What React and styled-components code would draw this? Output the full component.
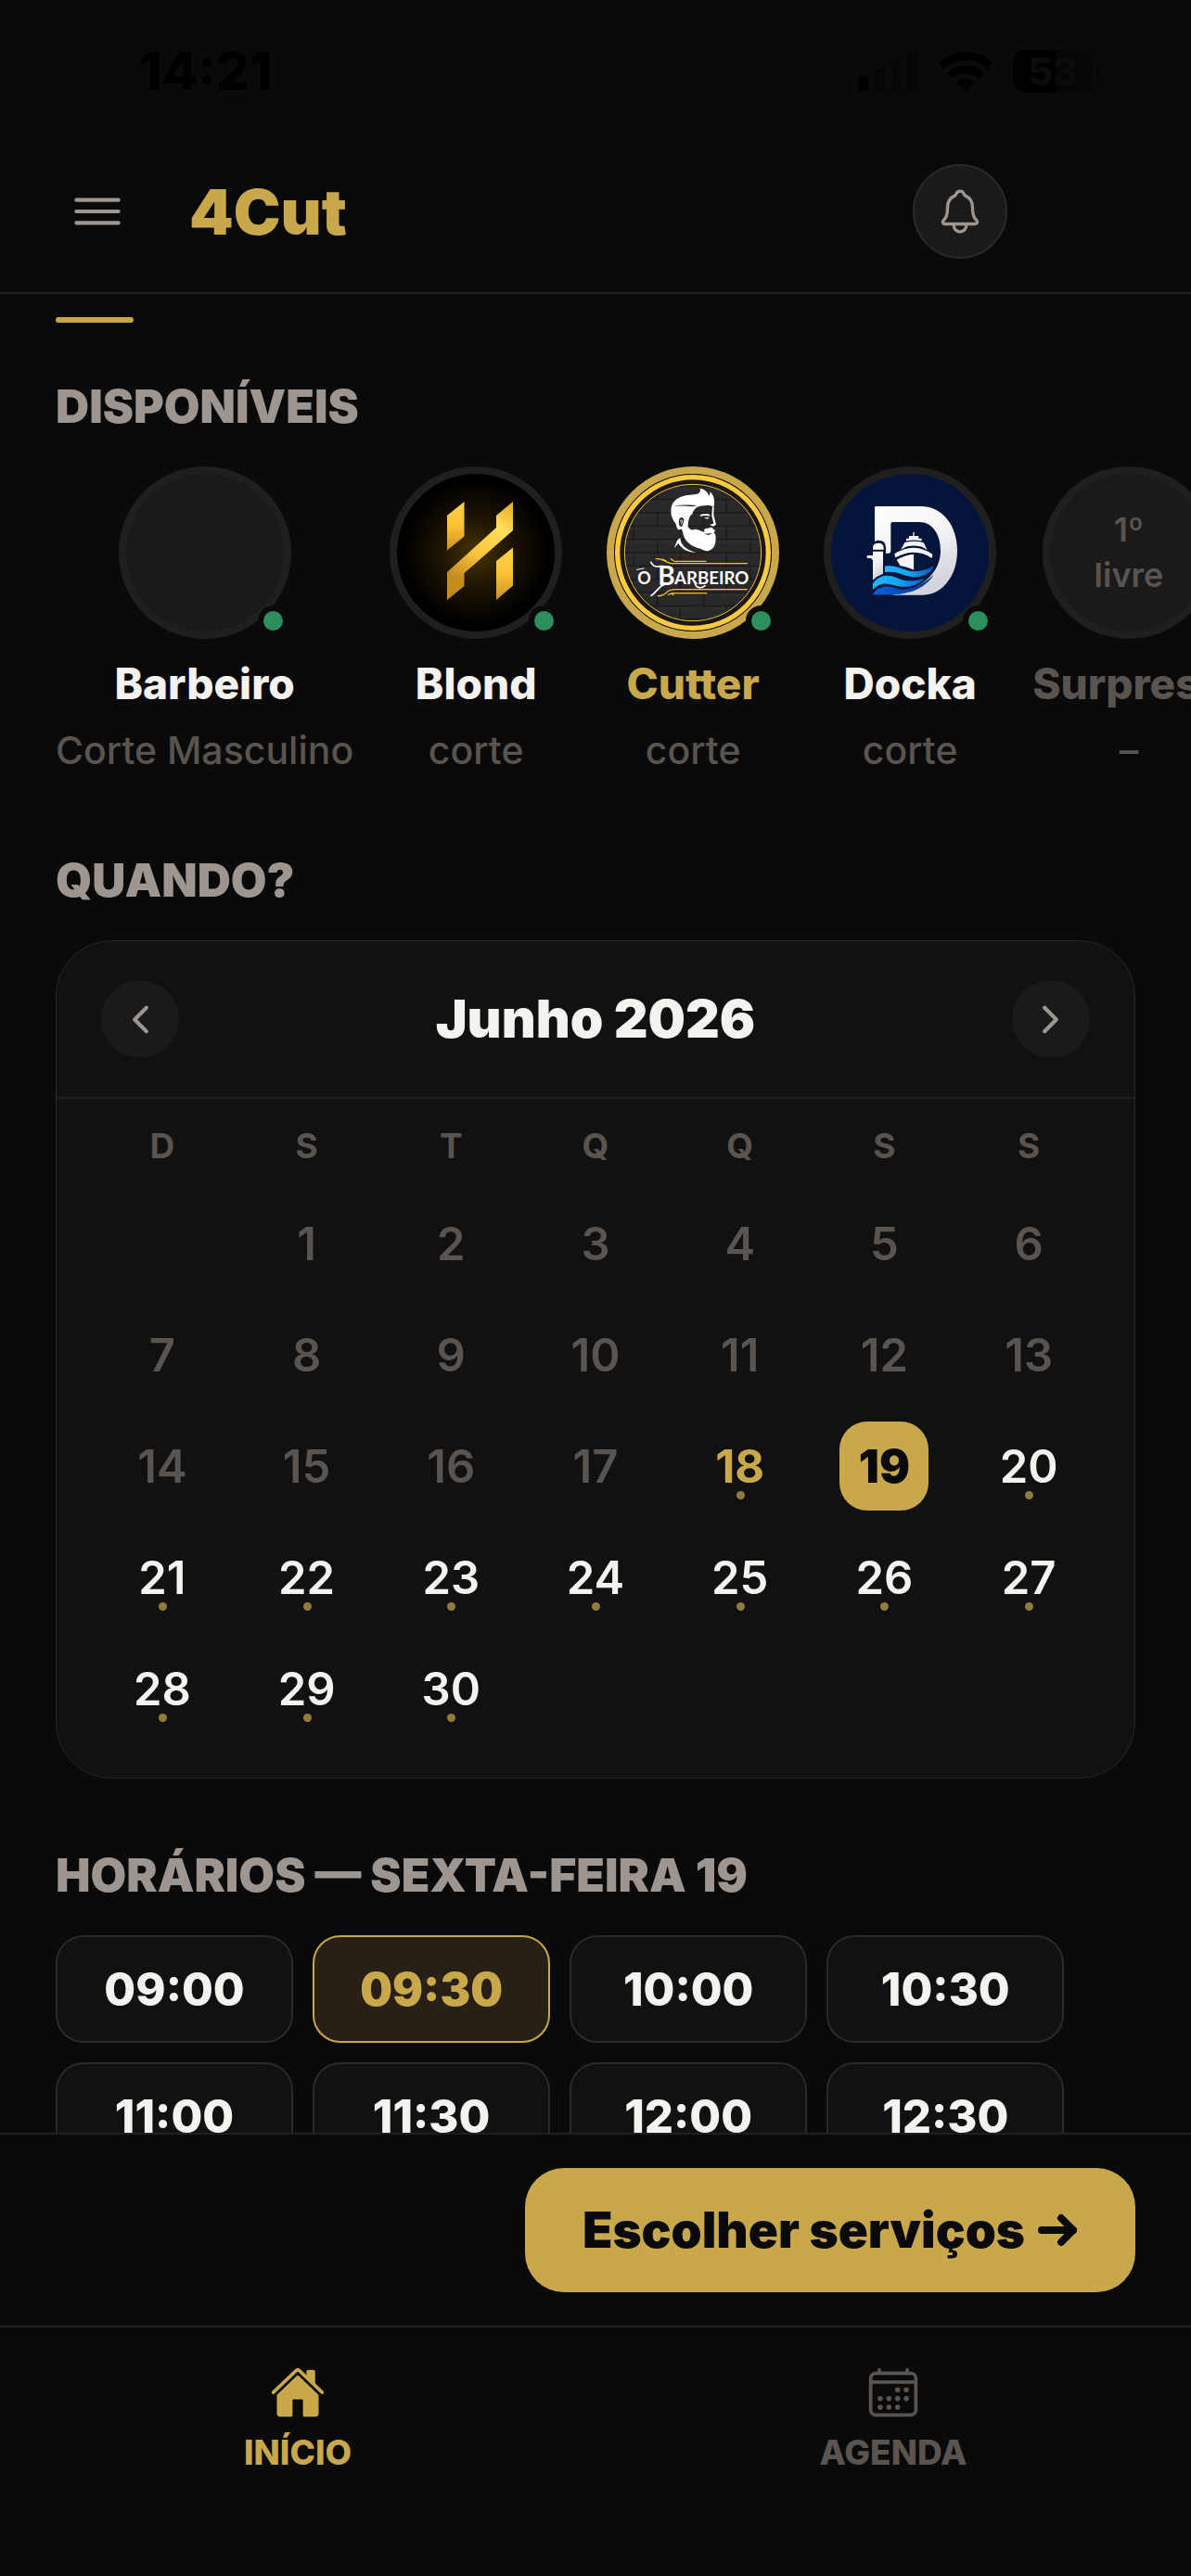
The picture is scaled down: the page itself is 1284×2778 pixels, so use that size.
import styled, { createGlobalStyle } from "styled-components";
import React, { useState } from 'react';
import {
    IoMenuOutline,
    IoNotificationsOutline,
    IoChevronBack,
    IoChevronForward,
    IoHome,
    IoCalendarOutline,
} from 'react-icons/io5';


const GlobalStyle = createGlobalStyle`
* {
  box-sizing: border-box;
}
body {
  margin: 0;
  background-color: #0a0a0a;
  color: #f5f3ef;
  font-family: "Inter", sans-serif;
}
button {
  margin: 0;
  padding: 0;
  border: none;
  background: none;
  color: inherit;
  font: inherit;
  cursor: pointer;
}
svg {
  display: block;
}
`;

const Screen = styled.div`
display: flex;
flex-direction: column;
height: 100vh;
overflow: hidden;
`;

const StatusBar = styled.div`
display: flex;
justify-content: space-between;
align-items: center;
height: 141px;
padding: 12px 97px 0 150px;
flex-shrink: 0;
color: #000000;
`;

const Clock = styled.div`
font-size: 56px;
font-weight: 800;
`;

const StatusIcons = styled.div`
display: flex;
align-items: center;
gap: 22px;
`;

const Battery = styled.div`
display: flex;
align-items: center;
gap: 3px;
`;

const BatteryBody = styled.div`
width: 86px;
height: 46px;
border-radius: 14px;
background: linear-gradient(to right, #000000 53%, #060606 53%);
color: #0c0c0c;
font-size: 41px;
font-weight: 800;
line-height: 46px;
text-align: center;
`;

const BatteryTip = styled.div`
width: 6px;
height: 14px;
border-radius: 0 6px 6px 0;
background-color: #060606;
`;

const Header = styled.header`
display: flex;
align-items: center;
padding: 36px 60px;
border-bottom: 2px solid #1f1f1f;
flex-shrink: 0;
`;

const MenuButton = styled.button`
display: flex;
justify-content: center;
width: 90px;
color: #9c9590;
font-size: 66px;
`;

const Brand = styled.h1`
flex: 1;
margin: 0 0 0 54px;
color: #c9a84c;
font-size: 68px;
line-height: 80px;
font-weight: 900;
`;

const BellButton = styled.button`
display: flex;
justify-content: center;
align-items: center;
width: 102px;
height: 102px;
margin-right: 138px;
border: 2px solid #2a2a2a;
border-radius: 50%;
background-color: #1a1a1a;
color: #9c9590;
font-size: 54px;
`;

const Content = styled.main`
flex: 1;
min-height: 0;
overflow: hidden;
padding: 25px 60px 0;
`;

const ActiveStep = styled.div`
width: 84px;
height: 6px;
margin-bottom: 61px;
border-radius: 3px;
background-color: #c9a84c;
`;

const Section = styled.section`
margin-bottom: 75px;
`;

const SectionTitle = styled.h2`
margin: 0 0 36px;
color: #9c9590;
font-size: 50px;
line-height: 58px;
font-weight: 900;
text-transform: uppercase;
`;

const BarberList = styled.div`
display: flex;
gap: 30px;
margin-right: -60px;
padding-bottom: 12px;
overflow: hidden;
`;

const BarberCard = styled.button`
display: flex;
flex-direction: column;
align-items: center;
gap: 21px;
min-width: 204px;
flex-shrink: 0;
`;

const Avatar = styled.div`
position: relative;
display: flex;
align-items: center;
justify-content: center;
width: 186px;
height: 186px;
border: 8px solid ${props => props.$active ? '#c9a84c' : '#1f1f1f'};
border-radius: 50%;
background-color: #1a1a1a;

svg {
  width: 100%;
  height: 100%;
  border-radius: 50%;
}
`;

const OnlineDot = styled.span`
position: absolute;
right: -5px;
bottom: -5px;
width: 33px;
height: 33px;
border: 6px solid #0a0a0a;
border-radius: 50%;
background-color: #2d8f5e;
`;

const AvatarText = styled.span`
width: 100px;
color: #5a5450;
font-size: 36px;
line-height: 49px;
font-weight: 600;
`;

const BarberName = styled.span`
color: ${props => props.$color};
font-size: 46px;
line-height: 54px;
font-weight: 800;
`;

const BarberService = styled.span`
color: #5a5450;
font-size: 41px;
line-height: 48px;
font-weight: 500;
`;

const Calendar = styled.div`
border: 1px solid #262626;
border-radius: 60px;
background-color: #111111;
`;

const CalendarHeader = styled.div`
display: flex;
justify-content: space-between;
align-items: center;
padding: 42px 48px;
border-bottom: 2px solid #1f1f1f;
`;

const CalendarNav = styled.button`
display: flex;
justify-content: center;
align-items: center;
width: 84px;
height: 84px;
border-radius: 50%;
background-color: #1a1a1a;
color: #9c9590;
font-size: 45px;
`;

const CalendarTitle = styled.h3`
margin: 0;
font-size: 57px;
line-height: 66px;
font-weight: 900;
`;

const WeekRow = styled.div`
display: grid;
grid-template-columns: repeat(7, 1fr);
padding: 30px 36px 24px;
color: #5a5450;
font-size: 37px;
line-height: 42px;
font-weight: 700;
text-align: center;
`;

const DaysGrid = styled.div`
display: grid;
grid-template-columns: repeat(7, 1fr);
justify-items: center;
row-gap: 24px;
padding: 12px 36px 48px;
`;

const dayColors = {
    past: '#5a5450',
    today: '#c9a84c',
    selected: '#0a0a0a',
    free: '#f5f3ef',
};

const dayWeights = {
    past: 600,
    today: 700,
    selected: 900,
    free: 600,
};

const Day = styled.button`
position: relative;
width: 96px;
height: 96px;
border-radius: 30px;
background-color: ${props => props.$state === 'selected' ? '#c9a84c' : 'transparent'};
color: ${props => dayColors[props.$state]};
font-size: 49px;
font-weight: ${props => dayWeights[props.$state]};
text-align: center;
`;

const DayDot = styled.span`
position: absolute;
left: 44px;
bottom: 12px;
width: 9px;
height: 9px;
border-radius: 50%;
background-color: #937b3b;
`;

const SlotGrid = styled.div`
display: grid;
grid-template-columns: repeat(4, 22%);
gap: 21px;
`;

const Slot = styled.button`
height: 116px;
border: 2px solid ${props => props.$active ? '#c9a84c' : '#2a2a2a'};
border-radius: 30px;
background-color: ${props => props.$active ? '#282015' : '#111111'};
color: ${props => props.$active ? '#c9a84c' : '#f5f3ef'};
font-size: 49px;
font-weight: ${props => props.$active ? 900 : 800};
`;

const ActionBar = styled.div`
display: flex;
justify-content: flex-end;
padding: 36px 60px;
border-top: 2px solid #1f1f1f;
flex-shrink: 0;
`;

const PrimaryButton = styled.button`
display: flex;
align-items: center;
gap: 14px;
height: 134px;
padding: 0 62px;
border-radius: 42px;
background-color: #c9a84c;
color: #0a0a0a;
font-size: 53px;
font-weight: 900;
`;

const TabBar = styled.nav`
display: grid;
grid-template-columns: 1fr 1fr;
height: 270px;
padding-top: 40px;
border-top: 2px solid #1f1f1f;
flex-shrink: 0;
`;

const TabLink = styled.a`
display: flex;
flex-direction: column;
align-items: center;
gap: 14px;
color: ${props => props.$active ? '#c9a84c' : '#5a5450'};
font-size: 37px;
line-height: 42px;
font-weight: 800;
text-decoration: none;
text-transform: uppercase;

svg {
  font-size: 60px;
}
`;


function SignalIcon() {
    return <svg width="65" height="42" viewBox="0 0 65 42">
        <rect x="0" y="26" width="11" height="16" rx="3" fill="#000000" />
        <rect x="18" y="18" width="11" height="24" rx="3" fill="#060606" />
        <rect x="36" y="9" width="11" height="33" rx="3" fill="#060606" />
        <rect x="54" y="0" width="11" height="42" rx="3" fill="#060606" />
    </svg>
}

function WifiIcon() {
    return <svg width="58" height="42" viewBox="0 0 58 42" fill="#000000">
        <path d="M29 0C40 0 50 4 57.500 11.500C58 12 58 13 57.500 13.500L53.500 17.500C53 18 52 18 51.500 17.500C45.500 12 37.500 9 29 9S12.500 12 6.500 17.500C6 18 5 18 4.500 17.500L.5 13.500C0 13 0 12 .5 11.500C8 4 18 0 29 0Z" />
        <path d="M29 14.500C36 14.500 42.500 17 47.500 21.500C48 22 48 23 47.500 23.500L43 28C42.500 28.500 42 28.500 41.500 28C38 25 33.500 23.500 29 23.500S20 25 16.500 28C16 28.500 15.500 28.500 15 28L10.500 23.500C10 23 10 22 10.500 21.500C15.500 17 22 14.500 29 14.500Z" />
        <path d="M29 28.500C32 28.500 35 29.500 37.300 31.500C38 32 38 33 37.500 33.500L30 41.500C29.500 42 28.500 42 28 41.500L20.500 33.500C20 33 20 32 20.700 31.500C23 29.500 26 28.500 29 28.500Z" />
    </svg>
}

function ArrowIcon() {
    return <svg width="43" height="36" viewBox="0 0 43 36" fill="none" stroke="currentColor" strokeWidth="8" strokeLinecap="round" strokeLinejoin="round">
        <path d="M4 18H38" />
        <path d="M25 5L38 18L25 31" />
    </svg>
}

function BlondLogo() {
    return <svg viewBox="0 0 170 170">
        <defs>
            <radialGradient id="blondGlow" cx="50%" cy="50%" r="46%">
                <stop offset="0" stopColor="#4a3405" />
                <stop offset="0.5" stopColor="#1c1302" />
                <stop offset="1" stopColor="#000000" />
            </radialGradient>
            <linearGradient id="blondBar" x1="0" y1="0" x2="0" y2="1">
                <stop offset="0" stopColor="#ffd24a" />
                <stop offset="0.5" stopColor="#fcc133" />
                <stop offset="1" stopColor="#c98f26" />
            </linearGradient>
            <linearGradient id="blondMid" gradientUnits="userSpaceOnUse" x1="120" y1="30" x2="58" y2="130">
                <stop offset="0" stopColor="#edac2c" />
                <stop offset="0.25" stopColor="#ffdf5c" />
                <stop offset="0.55" stopColor="#fdc63c" />
                <stop offset="0.85" stopColor="#c48b1f" />
            </linearGradient>
        </defs>
        <rect width="170" height="170" fill="url(#blondGlow)" />
        <path d="M54 45L72.500 30V67.500L54 82.500Z" fill="url(#blondBar)" />
        <path d="M107 94L125 79.500V120.500L107 136Z" fill="url(#blondBar)" />
        <path d="M107 45L125 30V61L72.500 107V121L54 136V106L107 58Z" fill="url(#blondMid)" />
    </svg>
}

function CutterLogo() {
    return <svg viewBox="48 48 510 510">
        <defs>
            <pattern id="cutterBricks" width="150" height="86" patternUnits="userSpaceOnUse">
                <rect width="150" height="86" fill="#292929" />
                <path d="M0 2H150M0 45H150M38 2V45M112 45V86" stroke="#171717" strokeWidth="4" />
                <path d="M0 10H150M50 54H140" stroke="#343434" strokeWidth="5" strokeDasharray="3 4" />
            </pattern>
        </defs>
        <circle cx="303" cy="303" r="256" fill="#1a1714" />
        <circle cx="303" cy="303" r="221" fill="url(#cutterBricks)" stroke="#e9bd45" strokeWidth="3" />
        <circle cx="303" cy="303" r="244" fill="none" stroke="#fbca42" strokeWidth="16" />
        <g fill="#ffffff">
            <path d="M233 180C228 143 246 126 280 118L314 114C326 112 330 104 325 95C343 98 352 107 354 119C358 115 359 110 358 105C371 116 376 136 370 155C362 150 353 149 343 151C316 150 306 162 301 178C290 186 288 200 287 219C292 226 298 232 308 228C320 225 332 239 342 235C334 229 345 221 352 225C359 218 368 221 369 227L376 231L371 237L376 245C379 268 374 288 360 294C350 300 340 298 330 291C298 284 275 266 271 240L267 226C256 234 250 225 248 210C240 200 235 190 233 180Z" />
            <path d="M242 288L253 262L262 255C264 282 284 295 313 302C287 303 266 290 256 273Z" />
            <path d="M325 183C335 176 347 176 358 180L356 185C346 182 337 182 329 185ZM338 190L356 189L350 194Z" />
            <path d="M366 153L371 156L370 180L378 212L369 218L357 213L370 209L364 184Z" />
        </g>
        <path d="M239 153Q268 146 318 150L301 154Q267 150 239 153Z" fill="#292929" />
        <path d="M258 198C261 184 276 188 274 201L268 218C258 221 257 208 258 198Z" fill="#292929" />
        <path d="M263 203C264 194 270 196 268 204L265 211" fill="none" stroke="#ffffff" strokeWidth="3" />
        <path d="M340 242L366 240L354 246Z" fill="#292929" />
        <g fill="none" stroke="#f4c51f" strokeWidth="4" strokeLinecap="round">
            <path d="M184 323C201 321 209 330 221 334C229 340 237 339 248 338H478" />
            <path d="M243 331H345M205 324L217 330M232 323L240 329" />
            <path d="M190 443C206 444 213 436 221 429C229 422 238 422 250 422H478" />
            <path d="M235 434H347M224 439L235 434M240 440L236 435" />
        </g>
        <g fill="#ffffff" fontFamily="Lato, sans-serif" fontWeight="700">
            <text x="124" y="404" fontSize="54">O</text>
            <text x="190" y="408" fontSize="84">B</text>
            <text x="243" y="404" fontSize="56">ARBEIRO</text>
        </g>
        <g fill="none" stroke="#ffffff" strokeWidth="5" strokeLinecap="round">
            <path d="M167 334C176 350 187 349 203 346" />
            <path d="M210 407C194 410 187 430 168 442" />
            <path d="M122 358L144 354" strokeWidth="3" />
            <path d="M310 402C313 418 330 420 342 410" />
        </g>
    </svg>
}

function DockaLogo() {
    return <svg viewBox="45 48 510 510">
        <defs>
            <linearGradient id="dockaWhite" x1="0" y1="0" x2="0.4" y2="1">
                <stop offset="0" stopColor="#ffffff" />
                <stop offset="0.5" stopColor="#f4f4f7" />
                <stop offset="1" stopColor="#d3d4dd" />
            </linearGradient>
            <linearGradient id="dockaWave" x1="0" y1="0" x2="1" y2="0">
                <stop offset="0" stopColor="#22b8fb" />
                <stop offset="0.5" stopColor="#12a5f5" />
                <stop offset="1" stopColor="#0a55c0" />
            </linearGradient>
            <linearGradient id="dockaDeep" x1="0" y1="0" x2="1" y2="0">
                <stop offset="0" stopColor="#0a63dc" />
                <stop offset="1" stopColor="#04338c" />
            </linearGradient>
        </defs>
        <rect x="45" y="48" width="510" height="510" fill="#03153a" />
        <path d="M190 153H336C405 153 453 215 453 297S405 440 338 440H240C330 425 399 372 399 297C399 243 372 204 330 204H244Q238 204 238 210V297Q238 305 230 305H222V287Q222 263 199 263Q192 263 186 267V157Q186 153 190 153Z" fill="url(#dockaWhite)" />
        <path d="M180 293V288Q180 272 198 272Q215 272 215 288V293Z" fill="#ffffff" />
        <path d="M180 299H213V371Q195 377 180 392V328L174 321L161 320V312H180Z" fill="url(#dockaWhite)" />
        <g fill="#f6f6fa">
            <path d="M310 237H314V249H328V257H338V265Q312 260 288 265V257H297V249H310Z" />
            <path d="M271 293L283 270Q312 262 344 270L356 295Q345 286 334 283Q312 278 290 283Z" />
            <path d="M250 307Q281 286 313 287Q345 288 373 308L371 321Q344 302 313 302Q282 302 253 319Z" />
            <path d="M257 326Q286 309 313 308V359Q288 348 269 346Z" />
        </g>
        <path d="M313 308V359L340 352L366 324Q340 309 313 308Z" fill="#04183e" />
        <path d="M219 347C262 341 279 364 315 364C345 363 363 354 377 346C368 370 344 382 316 382C279 382 263 360 219 367Z" fill="url(#dockaWave)" />
        <path d="M180 403C204 370 235 374 262 386C287 397 311 396 349 386C325 409 299 415 274 413C239 411 217 388 180 423Z" fill="url(#dockaWave)" />
        <path d="M180 437C202 407 231 410 258 419C287 428 329 417 377 374C350 419 298 437 243 439H180Z" fill="url(#dockaDeep)" />
    </svg>
}


const barbers = [
    { name: 'Barbeiro', service: 'Corte Masculino', online: true },
    { name: 'Blond', service: 'corte', online: true, logo: <BlondLogo /> },
    { name: 'Cutter', service: 'corte', online: true, logo: <CutterLogo /> },
    { name: 'Docka', service: 'corte', online: true, logo: <DockaLogo /> },
    { name: 'Surpresa', service: '–', online: false, logo: <AvatarText>1º livre</AvatarText> },
];

const weekDays = ['D', 'S', 'T', 'Q', 'Q', 'S', 'S'];
const days = Array.from({ length: 30 }, (_, i) => i + 1);
const today = 18;
const hours = ['09:00', '09:30', '10:00', '10:30', '11:00', '11:30', '12:00', '12:30'];


function App() {

    const [barber, setBarber] = useState('Cutter');
    const [day, setDay] = useState(19);
    const [hour, setHour] = useState('09:30');

    function nameColor(item) {
        if (item.name === barber) return '#c9a84c';
        return item.online ? '#f5f3ef' : '#5a5450';
    }

    function dayState(value) {
        if (value === day) return 'selected';
        if (value === today) return 'today';
        return value < today ? 'past' : 'free';
    }

    return <Screen>
        <GlobalStyle />
        <StatusBar>
            <Clock>14:21</Clock>
            <StatusIcons>
                <SignalIcon />
                <WifiIcon />
                <Battery>
                    <BatteryBody>53</BatteryBody>
                    <BatteryTip />
                </Battery>
            </StatusIcons>
        </StatusBar>
        <Header>
            <MenuButton aria-label="Menu"><IoMenuOutline /></MenuButton>
            <Brand>4Cut</Brand>
            <BellButton aria-label="Notificações"><IoNotificationsOutline /></BellButton>
        </Header>
        <Content>
            <ActiveStep />
            <Section>
                <SectionTitle>Disponíveis</SectionTitle>
                <BarberList>
                    {barbers.map(item =>
                        <BarberCard key={item.name} onClick={() => setBarber(item.name)}>
                            <Avatar $active={item.name === barber}>
                                {item.logo}
                                {item.online && <OnlineDot />}
                            </Avatar>
                            <BarberName $color={nameColor(item)}>{item.name}</BarberName>
                            <BarberService>{item.service}</BarberService>
                        </BarberCard>
                    )}
                </BarberList>
            </Section>
            <Section>
                <SectionTitle>Quando?</SectionTitle>
                <Calendar>
                    <CalendarHeader>
                        <CalendarNav aria-label="Mês anterior"><IoChevronBack /></CalendarNav>
                        <CalendarTitle>Junho 2026</CalendarTitle>
                        <CalendarNav aria-label="Próximo mês"><IoChevronForward /></CalendarNav>
                    </CalendarHeader>
                    <WeekRow>
                        {weekDays.map((name, i) => <span key={i}>{name}</span>)}
                    </WeekRow>
                    <DaysGrid>
                        <span />
                        {days.map(value =>
                            <Day
                                key={value}
                                $state={dayState(value)}
                                disabled={value < today}
                                onClick={() => setDay(value)}
                            >
                                {value}
                                {value >= today && value !== day && <DayDot />}
                            </Day>
                        )}
                    </DaysGrid>
                </Calendar>
            </Section>
            <Section>
                <SectionTitle>Horários — sexta-feira {day}</SectionTitle>
                <SlotGrid>
                    {hours.map(value =>
                        <Slot key={value} $active={value === hour} onClick={() => setHour(value)}>
                            {value}
                        </Slot>
                    )}
                </SlotGrid>
            </Section>
        </Content>
        <ActionBar>
            <PrimaryButton>
                Escolher serviços
                <ArrowIcon />
            </PrimaryButton>
        </ActionBar>
        <TabBar>
            <TabLink href="#inicio" $active>
                <IoHome />
                Início
            </TabLink>
            <TabLink href="#agenda">
                <IoCalendarOutline />
                Agenda
            </TabLink>
        </TabBar>
    </Screen>
}

export default App;
